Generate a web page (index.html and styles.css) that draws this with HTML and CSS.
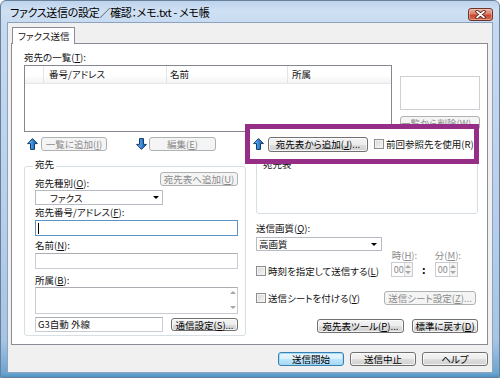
FILE: index.html
```html
<!DOCTYPE html>
<html lang="ja">
<head>
<meta charset="utf-8">
<title>ファクス送信の設定／確認</title>
<link rel="stylesheet" href="styles.css">
</head>
<body>
<div class="window">
  <div class="titlebar">
    <span class="title">ファクス送信の設定／確認：メモ.txt - メモ帳</span>
    <span class="close"><svg width="11" height="9" viewBox="0 0 11 9"><path d="M2 1.5 L9 7.5 M9 1.5 L2 7.5" stroke="#4a1a12" stroke-width="3.4" stroke-linecap="round"/><path d="M2 1.5 L9 7.5 M9 1.5 L2 7.5" stroke="#fff" stroke-width="1.7" stroke-linecap="round"/></svg></span>
  </div>
  <div class="client">
    <div class="tabs"><span class="tab">ファクス送信</span></div>
    <div class="pane">
      <div class="lbl">宛先の一覧(<u>T</u>):</div>
      <div class="listrow">
        <div class="listview">
          <div class="lv-head"><span class="c0"></span><span class="c1">番号/アドレス</span><span class="c2">名前</span><span class="c3">所属</span></div>
        </div>
        <div class="sidecol">
          <div class="sidebox"></div>
          <span class="btn dis">一覧から削除(<u>W</u>)...</span>
        </div>
      </div>
      <div class="actrow">
        <svg class="arrow up" width="11" height="12" viewBox="0 0 11 12"><defs><linearGradient id="ga" x1="0" y1="0" x2="1" y2="0"><stop offset="0" stop-color="#8fd0fa"/><stop offset="0.45" stop-color="#3b8fe0"/><stop offset="1" stop-color="#12549f"/></linearGradient></defs><path d="M5.5 0.6 L10.4 5.6 L7.5 5.6 L7.5 11.4 L3.5 11.4 L3.5 5.6 L0.6 5.6 Z" fill="url(#ga)" stroke="#183a66" stroke-width="1" stroke-linejoin="round"/></svg>
        <span class="btn dis b-add">一覧に追加(<u>I</u>)</span>
        <svg class="arrow down" width="11" height="12" viewBox="0 0 11 12"><path d="M3.5 0.6 L7.5 0.6 L7.5 6.4 L10.4 6.4 L5.5 11.4 L0.6 6.4 L3.5 6.4 Z" fill="url(#ga)" stroke="#183a66" stroke-width="1" stroke-linejoin="round"/></svg>
        <span class="btn dis b-edit">編集(<u>E</u>)</span>
      </div>
      <div class="lower">
        <div class="group">
          <span class="legend">宛先</span>
          <div class="g-row1"><span class="lbl">宛先種別(<u>O</u>):</span><span class="btn dis b-toaddr">宛先表へ追加(<u>U</u>)</span></div>
          <div class="combo c-type"><span>ファクス</span><i class="tri"></i></div>
          <div class="lbl m1">宛先番号/アドレス(<u>F</u>):</div>
          <div class="field focus"><i class="caret"></i></div>
          <div class="lbl m3">名前(<u>N</u>):</div>
          <div class="field"></div>
          <div class="lbl m5">所属(<u>B</u>):</div>
          <div class="field area"><span class="sbar"><i class="sup"></i><i class="sdn"></i></span></div>
          <div class="g-last"><div class="field line">G3自動 外線</div><span class="btn b-comm">通信設定(<u>S</u>)...</span></div>
        </div>
        <div class="rightcol">
          <div class="abook">宛先表</div>
          <div class="lbl q">送信画質(<u>Q</u>):</div>
          <div class="combo c-q"><span>高画質</span><i class="tri"></i></div>
          <div class="timerow">
            <div class="chk"><i class="cb"></i>時刻を指定して送信する(<u>L</u>)</div>
            <div class="timeblk">
              <div class="tlabels"><span>時(<u>H</u>):</span><span>分(<u>M</u>):</span></div>
              <div class="spins">
                <div class="spin"><span class="sv">00</span><span class="sb"><i class="sup"></i><i class="sdn"></i></span></div>
                <span class="colon">:</span>
                <div class="spin"><span class="sv">00</span><span class="sb"><i class="sup"></i><i class="sdn"></i></span></div>
              </div>
            </div>
          </div>
          <div class="sheetrow">
            <div class="chk"><i class="cb"></i>送信シートを付ける(<u>Y</u>)</div>
            <span class="btn dis b-sheet">送信シート設定(<u>Z</u>)...</span>
          </div>
          <div class="toolrow">
            <span class="btn b-tool">宛先表ツール(<u>P</u>)...</span>
            <span class="btn b-std">標準に戻す(<u>D</u>)</span>
          </div>
        </div>
      </div>
      <div class="highlight">
        <svg class="arrow" width="11" height="12" viewBox="0 0 11 12"><path d="M5.5 0.6 L10.4 5.6 L7.5 5.6 L7.5 11.4 L3.5 11.4 L3.5 5.6 L0.6 5.6 Z" fill="url(#ga)" stroke="#183a66" stroke-width="1" stroke-linejoin="round"/></svg>
        <span class="btn b-from">宛先表から追加(<u>J</u>)...</span>
        <div class="chk"><i class="cb"></i>前回参照先を使用(R)</div>
      </div>
    </div>
    <div class="footer">
      <span class="btn def">送信開始</span>
      <span class="btn">送信中止</span>
      <span class="btn">ヘルプ</span>
    </div>
  </div>
</div>
</body>
</html>
```
FILE: styles.css
```css
* { box-sizing: border-box; margin: 0; padding: 0; }
html, body { width: 500px; height: 378px; overflow: hidden; background: #fff; }
body {
  font-family: "Noto Sans CJK JP", "Noto Sans", sans-serif;
  font-size: 9.5px;
  line-height: 12px;
  color: #111;
  font-feature-settings: "palt" 1;
}
u { text-decoration-thickness: 1px; text-underline-offset: 1px; }
i { display: block; font-style: normal; }

.window {
  width: 500px; height: 378px;
  display: flex; flex-direction: column;
  border: 1px solid #697f9a;
  border-radius: 6px 6px 0 0;
  background: linear-gradient(180deg, #bdd4ee 0, #cfe0f3 10px, #c6d9ef 24px, #b9d0eb 200px, #a6c4e4 340px, #6aa5d0 372px, #4e93c4 100%);
}
.titlebar { height: 21px; flex: none; display: flex; align-items: center; padding: 0 6px 0 9px; }
.title { flex: 1; font-size: 11px; line-height: 14px; letter-spacing: -0.3px; color: #000; white-space: nowrap; }
.close {
  align-self: flex-start; margin-top: 7px;
  width: 25px; height: 13px;
  border: 1px solid #6e3428; border-radius: 3px;
  background: linear-gradient(180deg, #eab0a1 0, #dc7d66 45%, #c8472f 55%, #d46a4c 100%);
  box-shadow: inset 0 0 0 1px rgba(255, 220, 210, .45);
  display: flex; align-items: center; justify-content: center;
}

.client {
  flex: 1; margin: 0 6px 4px;
  background: #f0f0f0; border: 1px solid #8da3bd;
  display: flex; flex-direction: column;
}
.tabs { display: flex; padding: 4px 0 0 4px; position: relative; z-index: 1; }
.tab {
  height: 17px; padding: 0 5px; margin-bottom: -1px;
  border: 1px solid #898c95; border-bottom: none; background: #fff;
  line-height: 16px;
}
.pane {
  margin: 0 4px 0 3px; height: 302px;
  border: 1px solid #898c95; background: #fff;
  position: relative; padding: 7px 9px 0 12px;
}

/* buttons */
.btn {
  display: inline-flex; align-items: center; justify-content: center;
  height: 14px; flex: none;
  border: 1px solid #707070; border-radius: 3px;
  background: linear-gradient(180deg, #f4f4f4 0, #ececec 50%, #dedede 51%, #d0d0d0 100%);
  box-shadow: inset 0 0 0 1px rgba(255, 255, 255, .75);
  color: #000; white-space: nowrap; line-height: 12px;
}
.btn.dis { border-color: #adb2b5; background: #f4f4f4; color: #8a8a8a; box-shadow: none; }
.btn.def {
  border-color: #3c7fb1;
  background: linear-gradient(180deg, #eaf6fd 0, #d9f0fc 50%, #bee6fd 51%, #a7d9f5 100%);
  box-shadow: inset 0 0 0 1px #9edcf9;
}

/* list */
.listrow { display: flex; gap: 8px; margin-top: 2px; }
.listview { width: 368px; height: 67px; border: 1px solid #828790; background: #fff; flex: none; }
.lv-head { display: flex; height: 18px; border-bottom: 1px solid #e6e6e6; background: linear-gradient(#fff 0, #fff 50%, #f3f4f6 100%); }
.lv-head span { height: 17px; border-right: 1px solid #e2e4e8; line-height: 16px; padding-left: 5px; white-space: nowrap; }
.lv-head .c0 { width: 19px; padding: 0; }
.lv-head .c1 { width: 123px; }
.lv-head .c2 { width: 121px; padding-left: 3px; }
.lv-head .c3 { flex: 1; border-right: none; padding-left: 4px; }
.sidecol { flex: 1; display: flex; flex-direction: column; }
.sidebox { height: 34px; margin-top: 11px; border: 1px solid #cdd1d6; background: #fff; }
.sidecol .btn { margin-top: 6px; width: 100%; }

/* action row */
.actrow { display: flex; align-items: center; height: 14px; margin-top: 5px; }
.arrow { display: block; flex: none; }
.actrow .up { margin-left: 3px; }
.b-add { width: 66px; margin-left: 3px; }
.actrow .down { margin-left: 29px; }
.b-edit { width: 67px; margin-left: 2px; }

/* lower */
.lower { display: flex; gap: 10px; margin-top: 1px; align-items: flex-start; }
.group {
  width: 222px; height: 170px; margin-top: 14px; flex: none;
  border: 1px solid #d5dfe5; border-radius: 3px;
  padding: 0 7px 0 10px;
  display: flex; flex-direction: column;
}
.legend { align-self: flex-start; margin: -9px 0 0 -2px; padding: 0 2px; background: #fff; line-height: 12px; }
.g-row1 { display: flex; justify-content: space-between; height: 18px; margin-top: 2px; }
.g-row1 .lbl { align-self: flex-end; margin-bottom: 1px; }
.b-toaddr { width: 78px; }
.combo { display: flex; align-items: center; height: 15px; border: 1px solid #b7bcc4; background: #fff; }
.c-type { width: 128px; padding-left: 14px; }
.tri { margin-left: auto; margin-right: 3px; width: 0; height: 0; border-left: 3px solid transparent; border-right: 3px solid transparent; border-top: 3px solid #000; }
.m1 { margin-top: 1px; }
.m3 { margin-top: 3px; }
.m5 { margin-top: 5px; }
.field { height: 16px; margin-top: 2px; border: 1px solid #c8ccd3; border-top-color: #abadb3; background: #fff; }
.field.focus { border-color: #5b93c4; display: flex; align-items: center; }
.caret { width: 1px; height: 11px; background: #000; margin-left: 2px; }
.area { height: 27px; margin-top: 1px; display: flex; justify-content: flex-end; }
.sbar { width: 9px; display: flex; flex-direction: column; justify-content: space-between; align-items: center; padding: 3px 0 4px; }
.sup { width: 0; height: 0; border-left: 3px solid transparent; border-right: 3px solid transparent; border-bottom: 3px solid #a8a8a8; }
.sdn { width: 0; height: 0; border-left: 3px solid transparent; border-right: 3px solid transparent; border-top: 3px solid #a8a8a8; }
.g-last { display: flex; justify-content: space-between; align-items: center; margin-top: 3px; }
.field.line { width: 128px; height: 15px; margin: 0; padding-left: 2px; line-height: 13px; }
.b-comm { width: 67px; height: 13px; }

.rightcol { flex: 1; display: flex; flex-direction: column; }
.abook { height: 62px; border: 1px solid #d5dfe5; border-radius: 3px; padding: 5px 0 0 6px; }
.lbl.q { margin-top: 8px; }
.c-q { width: 126px; height: 14px; margin-top: 3px; padding-left: 2px; }
.c-q .tri { margin-right: 4px; }

.chk { display: flex; align-items: center; height: 13px; white-space: nowrap; }
.cb {
  width: 10px; height: 10px; margin-right: 2px; flex: none;
  border: 1px solid #8e8f8f;
  background: linear-gradient(135deg, #d6d6d6, #f6f6f6);
  box-shadow: inset 0 0 0 1px #f2f2f2;
}
.timerow { display: flex; align-items: flex-end; }
.timeblk { margin: -2px 17px 0 auto; display: flex; flex-direction: column; }
.tlabels { display: flex; height: 12px; color: #8c8c8c; }
.tlabels span:first-child { width: 44px; padding-left: 1px; }
.spins { display: flex; align-items: center; margin-top: 1px; }
.spin { width: 22px; height: 15px; display: flex; border: 1px solid #c9cdd3; background: #fff; }
.sv { flex: 1; color: #8a8a8a; font-size: 9px; line-height: 13px; padding-left: 2px; }
.sb { width: 8px; display: flex; flex-direction: column; justify-content: space-around; align-items: center; border-left: 1px solid #dadada; background: #f4f4f4; }
.colon { width: 22px; text-align: center; font-weight: bold; font-size: 11px; line-height: 13px; color: #000; }
.spins .spin + .colon + .spin { width: 23px; }
.sheetrow { display: flex; align-items: center; height: 14px; margin-top: 14px; }
.b-sheet { margin-left: auto; margin-right: 2px; width: 92px; }
.toolrow { display: flex; justify-content: flex-end; gap: 8px; margin-top: 14px; }
.b-tool { width: 87px; }
.b-std { width: 66px; }

/* annotation highlight over the dialog */
.highlight {
  position: absolute; left: 233px; top: 80px; z-index: 2;
  width: 234px; height: 40px;
  border: 5px solid #962d87; background: #fff;
  display: flex; align-items: center; padding-left: 3px;
}
.highlight .arrow { margin-right: 4px; }
.b-from { width: 100px; height: 15px; }
.highlight .chk { margin-left: 6px; }

.footer { display: flex; justify-content: flex-end; gap: 6px; margin: 7px 4px 0 0; }
.footer .btn { width: 66px; }
```
